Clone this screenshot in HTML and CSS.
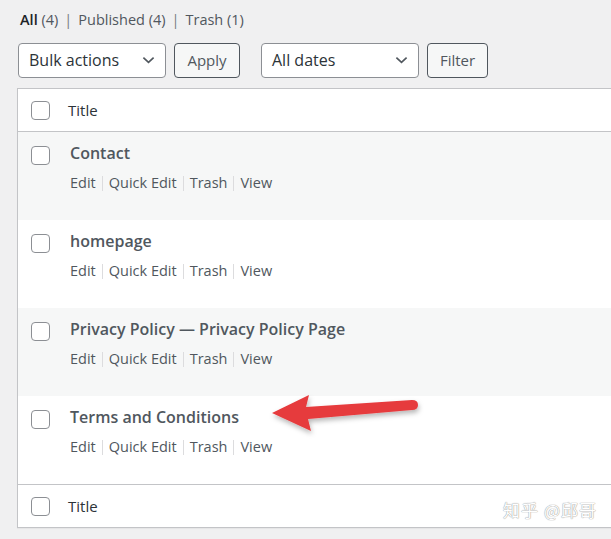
FILE: index.html
```html
<!DOCTYPE html>
<html lang="en">
<head>
<meta charset="utf-8">
<title>Pages</title>
<link rel="stylesheet" href="styles.css">
</head>
<body>
<div class="page">
  <ul class="subsubsub">
    <li><b>All</b> <span class="count">(4)</span></li>
    <li class="sep">|</li>
    <li>Published <span class="count">(4)</span></li>
    <li class="sep">|</li>
    <li>Trash <span class="count">(1)</span></li>
  </ul>

  <div class="tablenav">
    <div class="select bulk"><span>Bulk actions</span>
      <svg viewBox="0 0 14 8" class="chev"><path d="M1.5 1.5 L7 6.5 L12.5 1.5" fill="none" stroke="#50575e" stroke-width="1.8"/></svg>
    </div>
    <div class="button apply">Apply</div>
    <div class="select dates"><span>All dates</span>
      <svg viewBox="0 0 14 8" class="chev"><path d="M1.5 1.5 L7 6.5 L12.5 1.5" fill="none" stroke="#50575e" stroke-width="1.8"/></svg>
    </div>
    <div class="button filter">Filter</div>
  </div>

  <div class="table">
    <div class="head">
      <span class="cb"></span><span class="col-title">Title</span>
    </div>
    <div class="row alt">
      <span class="cb"></span>
      <div class="cell">
        <div class="row-title">Contact</div>
        <div class="actions">Edit<i></i>Quick Edit<i></i>Trash<i></i>View</div>
      </div>
    </div>
    <div class="row">
      <span class="cb"></span>
      <div class="cell">
        <div class="row-title">homepage</div>
        <div class="actions">Edit<i></i>Quick Edit<i></i>Trash<i></i>View</div>
      </div>
    </div>
    <div class="row alt">
      <span class="cb"></span>
      <div class="cell">
        <div class="row-title">Privacy Policy — Privacy Policy Page</div>
        <div class="actions">Edit<i></i>Quick Edit<i></i>Trash<i></i>View</div>
      </div>
    </div>
    <div class="row">
      <span class="cb"></span>
      <div class="cell">
        <div class="row-title">Terms and Conditions</div>
        <div class="actions">Edit<i></i>Quick Edit<i></i>Trash<i></i>View</div>
      </div>
    </div>
    <div class="foot">
      <span class="cb"></span><span class="col-title">Title</span>
      <span class="watermark">知乎 @邱哥</span>
    </div>
  </div>

  <svg class="arrow" viewBox="0 0 611 539" width="611" height="539">
    <defs>
      <filter id="sh" x="-20%" y="-50%" width="140%" height="200%">
        <feDropShadow dx="1" dy="3" stdDeviation="2.5" flood-color="#000" flood-opacity="0.28"/>
      </filter>
    </defs>
    <path d="M272 413 L309 395 L306 407 L412 400 Q418 400 418 405 Q418 410 412 410 L308 419 L311 431 Z" fill="#e63a3d" filter="url(#sh)"/>
  </svg>
</div>
</body>
</html>
```

FILE: styles.css
```css
* { box-sizing: border-box; }
html, body { margin: 0; padding: 0; }
body {
  background: #f0f0f1;
  font-family: "Open Sans", "Noto Sans", "Noto Sans CJK SC", sans-serif;
  color: #50575e;
  width: 611px;
  height: 539px;
  overflow: hidden;
}
.page {
  position: relative;
  padding: 9px 0 0 17px;
  height: 539px;
}
.subsubsub {
  list-style: none;
  margin: 0 0 0 3px;
  padding: 0;
  display: flex;
  gap: 6px;
  font-size: 14.5px;
  line-height: 22px;
  color: #50575e;
}
.subsubsub b { color: #1d2327; font-weight: 600; }
.subsubsub .sep { color: #787c82; }
.count { color: #50575e; }

.tablenav {
  display: flex;
  align-items: center;
  margin-top: 12px;
  height: 35px;
}
.select {
  height: 35px;
  background: #fff;
  border: 1px solid #8c8f94;
  border-radius: 4px;
  display: flex;
  align-items: center;
  justify-content: space-between;
  padding: 0 10px 1px 10px;
  font-size: 16px;
  color: #2c3338;
}
.select.bulk { width: 148px; margin-left: 1px; }
.select.dates { width: 158px; }
.chev { width: 13px; height: 8px; }
.button {
  height: 35px;
  border: 1px solid #50575e;
  border-radius: 4px;
  background: #f6f7f7;
  display: flex;
  align-items: center;
  justify-content: center;
  padding-bottom: 1px;
  font-size: 15px;
  color: #50575e;
}
.button.apply { width: 66px; margin-left: 8px; margin-right: 21px; }
.button.filter { width: 61px; margin-left: 8px; }

.table {
  margin-top: 10px;
  background: #fff;
  border: 1px solid #c3c4c7;
  border-right: none;
  box-shadow: 0 1px 1px rgba(0,0,0,0.04);
}
.cb {
  flex: none;
  width: 19px;
  height: 19px;
  border: 1px solid #8c8f94;
  border-radius: 4px;
  background: #fff;
}
.head, .foot {
  height: 43px;
  display: flex;
  align-items: center;
  padding-left: 13px;
  position: relative;
}
.head { border-bottom: 1px solid #c3c4c7; }
.foot { border-top: 1px solid #c3c4c7; height: 43px; }
.col-title {
  margin-left: 18px;
  font-size: 15px;
  color: #2c3338;
}
.row {
  height: 88px;
  display: flex;
  align-items: flex-start;
  padding: 14px 0 0 13px;
  background: #fff;
}
.row.alt { background: #f6f7f7; }
.cell { margin-left: 20px; margin-top: -5px; }
.row-title {
  font-size: 16px;
  font-weight: 600;
  color: #50575e;
  line-height: 24px;
}
.actions {
  margin-top: 8px;
  font-size: 14.5px;
  color: #50575e;
  line-height: 20px;
  display: flex;
  align-items: center;
}
.actions i {
  display: inline-block;
  width: 1px;
  height: 15px;
  background: #dcdcde;
  margin: 1px 6px 0;
}
.watermark {
  position: absolute;
  right: 14px;
  top: 12px;
  font-size: 17px;
  color: #fff;
  font-family: "Noto Sans CJK SC", sans-serif;
  text-shadow: 0 0 1px #9a9a9a, 0 0 1px #9a9a9a;
  letter-spacing: 1px;
}
.arrow {
  position: absolute;
  left: 0;
  top: 0;
  pointer-events: none;
}
```
